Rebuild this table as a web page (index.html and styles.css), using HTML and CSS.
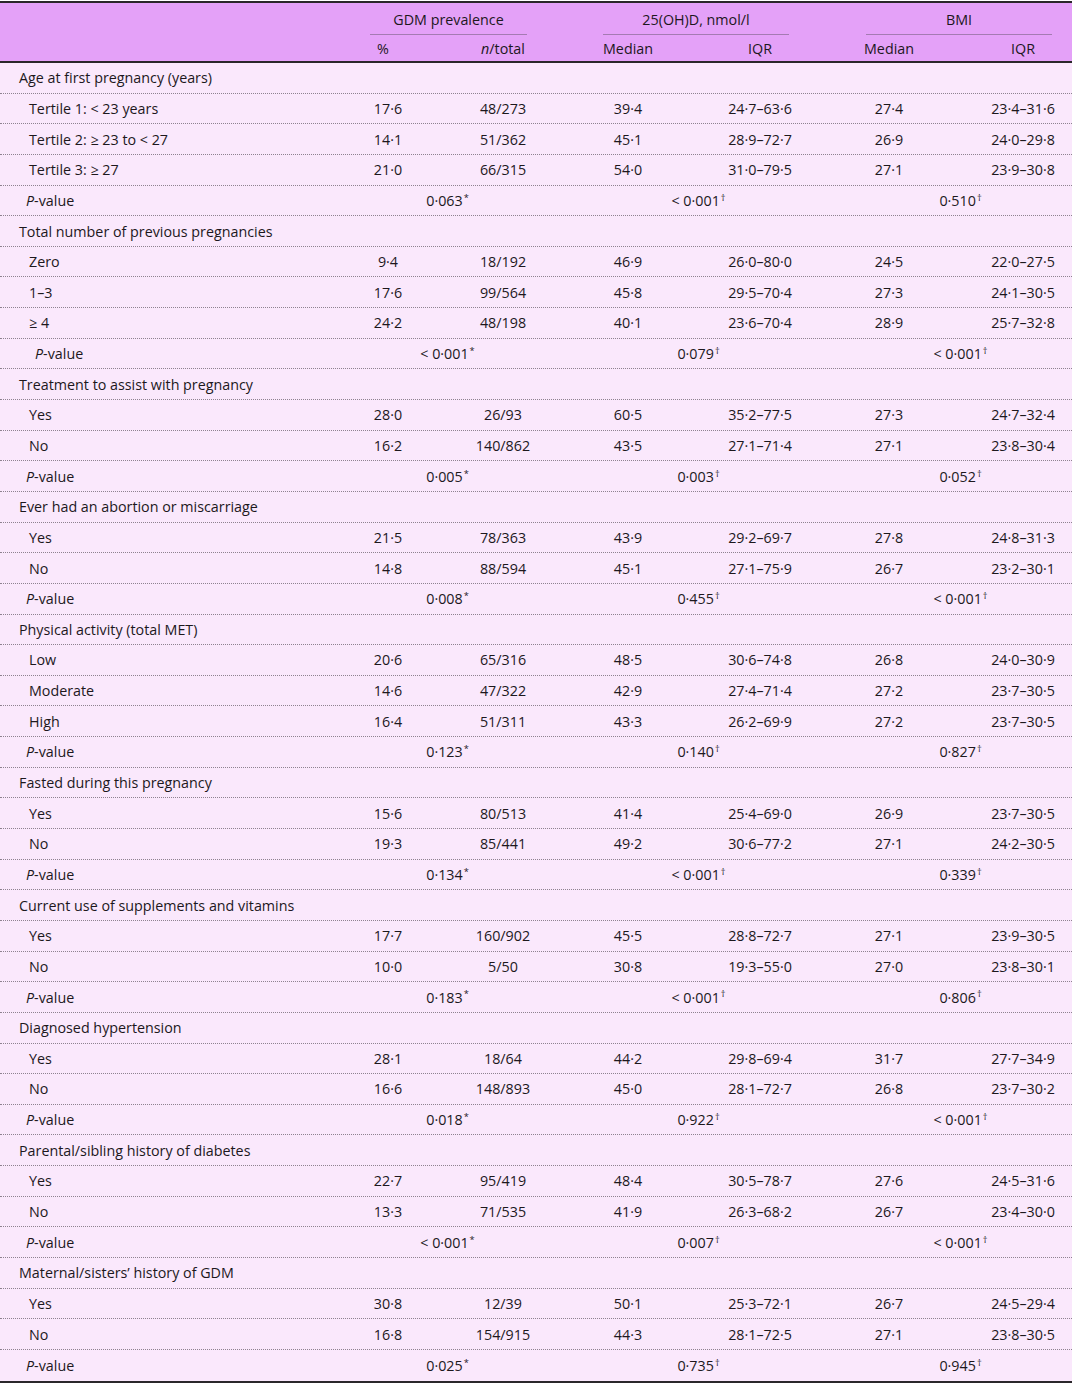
FILE: index.html
```html
<!DOCTYPE html>
<html lang="en">
<head>
<meta charset="utf-8">
<title>GDM table</title>
<link rel="stylesheet" href="styles.css">
</head>
<body>
<div class="tbl">
  <div class="thead">
    <div class="grid hrow1">
      <span class="grp g1">GDM prevalence</span>
      <span class="grp g2">25(OH)D, nmol/l</span>
      <span class="grp g3">BMI</span>
    </div>
    <div class="grid hrow2">
      <span class="c1 pct">%</span><span class="c2"><i>n</i>/total</span>
      <span class="c3">Median</span><span class="c4">IQR</span>
      <span class="c5">Median</span><span class="c6">IQR</span>
    </div>
  </div>

  <div class="grid row"><span class="lab sec">Age at first pregnancy (years)</span></div>
  <div class="grid row"><span class="lab sub">Tertile 1: &lt; 23 years</span><span class="c1">17·6</span><span class="c2">48/273</span><span class="c3">39·4</span><span class="c4">24·7–63·6</span><span class="c5">27·4</span><span class="c6">23·4–31·6</span></div>
  <div class="grid row"><span class="lab sub">Tertile 2: ≥ 23 to &lt; 27</span><span class="c1">14·1</span><span class="c2">51/362</span><span class="c3">45·1</span><span class="c4">28·9–72·7</span><span class="c5">26·9</span><span class="c6">24·0–29·8</span></div>
  <div class="grid row"><span class="lab sub">Tertile 3: ≥ 27</span><span class="c1">21·0</span><span class="c2">66/315</span><span class="c3">54·0</span><span class="c4">31·0–79·5</span><span class="c5">27·1</span><span class="c6">23·9–30·8</span></div>
  <div class="grid row"><span class="lab pv"><i>P</i>-value</span><span class="p1">0·063<sup>*</sup></span><span class="p2">&lt; 0·001<sup>†</sup></span><span class="p3">0·510<sup>†</sup></span></div>

  <div class="grid row"><span class="lab sec">Total number of previous pregnancies</span></div>
  <div class="grid row"><span class="lab sub">Zero</span><span class="c1">9·4</span><span class="c2">18/192</span><span class="c3">46·9</span><span class="c4">26·0–80·0</span><span class="c5">24·5</span><span class="c6">22·0–27·5</span></div>
  <div class="grid row"><span class="lab sub">1–3</span><span class="c1">17·6</span><span class="c2">99/564</span><span class="c3">45·8</span><span class="c4">29·5–70·4</span><span class="c5">27·3</span><span class="c6">24·1–30·5</span></div>
  <div class="grid row"><span class="lab sub">≥ 4</span><span class="c1">24·2</span><span class="c2">48/198</span><span class="c3">40·1</span><span class="c4">23·6–70·4</span><span class="c5">28·9</span><span class="c6">25·7–32·8</span></div>
  <div class="grid row"><span class="lab pv pv-deep"><i>P</i>-value</span><span class="p1">&lt; 0·001<sup>*</sup></span><span class="p2">0·079<sup>†</sup></span><span class="p3">&lt; 0·001<sup>†</sup></span></div>

  <div class="grid row"><span class="lab sec">Treatment to assist with pregnancy</span></div>
  <div class="grid row"><span class="lab sub">Yes</span><span class="c1">28·0</span><span class="c2">26/93</span><span class="c3">60·5</span><span class="c4">35·2–77·5</span><span class="c5">27·3</span><span class="c6">24·7–32·4</span></div>
  <div class="grid row"><span class="lab sub">No</span><span class="c1">16·2</span><span class="c2">140/862</span><span class="c3">43·5</span><span class="c4">27·1–71·4</span><span class="c5">27·1</span><span class="c6">23·8–30·4</span></div>
  <div class="grid row"><span class="lab pv"><i>P</i>-value</span><span class="p1">0·005<sup>*</sup></span><span class="p2">0·003<sup>†</sup></span><span class="p3">0·052<sup>†</sup></span></div>

  <div class="grid row"><span class="lab sec">Ever had an abortion or miscarriage</span></div>
  <div class="grid row"><span class="lab sub">Yes</span><span class="c1">21·5</span><span class="c2">78/363</span><span class="c3">43·9</span><span class="c4">29·2–69·7</span><span class="c5">27·8</span><span class="c6">24·8–31·3</span></div>
  <div class="grid row"><span class="lab sub">No</span><span class="c1">14·8</span><span class="c2">88/594</span><span class="c3">45·1</span><span class="c4">27·1–75·9</span><span class="c5">26·7</span><span class="c6">23·2–30·1</span></div>
  <div class="grid row"><span class="lab pv"><i>P</i>-value</span><span class="p1">0·008<sup>*</sup></span><span class="p2">0·455<sup>†</sup></span><span class="p3">&lt; 0·001<sup>†</sup></span></div>

  <div class="grid row"><span class="lab sec">Physical activity (total MET)</span></div>
  <div class="grid row"><span class="lab sub">Low</span><span class="c1">20·6</span><span class="c2">65/316</span><span class="c3">48·5</span><span class="c4">30·6–74·8</span><span class="c5">26·8</span><span class="c6">24·0–30·9</span></div>
  <div class="grid row"><span class="lab sub">Moderate</span><span class="c1">14·6</span><span class="c2">47/322</span><span class="c3">42·9</span><span class="c4">27·4–71·4</span><span class="c5">27·2</span><span class="c6">23·7–30·5</span></div>
  <div class="grid row"><span class="lab sub">High</span><span class="c1">16·4</span><span class="c2">51/311</span><span class="c3">43·3</span><span class="c4">26·2–69·9</span><span class="c5">27·2</span><span class="c6">23·7–30·5</span></div>
  <div class="grid row"><span class="lab pv"><i>P</i>-value</span><span class="p1">0·123<sup>*</sup></span><span class="p2">0·140<sup>†</sup></span><span class="p3">0·827<sup>†</sup></span></div>

  <div class="grid row"><span class="lab sec">Fasted during this pregnancy</span></div>
  <div class="grid row"><span class="lab sub">Yes</span><span class="c1">15·6</span><span class="c2">80/513</span><span class="c3">41·4</span><span class="c4">25·4–69·0</span><span class="c5">26·9</span><span class="c6">23·7–30·5</span></div>
  <div class="grid row"><span class="lab sub">No</span><span class="c1">19·3</span><span class="c2">85/441</span><span class="c3">49·2</span><span class="c4">30·6–77·2</span><span class="c5">27·1</span><span class="c6">24·2–30·5</span></div>
  <div class="grid row"><span class="lab pv"><i>P</i>-value</span><span class="p1">0·134<sup>*</sup></span><span class="p2">&lt; 0·001<sup>†</sup></span><span class="p3">0·339<sup>†</sup></span></div>

  <div class="grid row"><span class="lab sec">Current use of supplements and vitamins</span></div>
  <div class="grid row"><span class="lab sub">Yes</span><span class="c1">17·7</span><span class="c2">160/902</span><span class="c3">45·5</span><span class="c4">28·8–72·7</span><span class="c5">27·1</span><span class="c6">23·9–30·5</span></div>
  <div class="grid row"><span class="lab sub">No</span><span class="c1">10·0</span><span class="c2">5/50</span><span class="c3">30·8</span><span class="c4">19·3–55·0</span><span class="c5">27·0</span><span class="c6">23·8–30·1</span></div>
  <div class="grid row"><span class="lab pv"><i>P</i>-value</span><span class="p1">0·183<sup>*</sup></span><span class="p2">&lt; 0·001<sup>†</sup></span><span class="p3">0·806<sup>†</sup></span></div>

  <div class="grid row"><span class="lab sec">Diagnosed hypertension</span></div>
  <div class="grid row"><span class="lab sub">Yes</span><span class="c1">28·1</span><span class="c2">18/64</span><span class="c3">44·2</span><span class="c4">29·8–69·4</span><span class="c5">31·7</span><span class="c6">27·7–34·9</span></div>
  <div class="grid row"><span class="lab sub">No</span><span class="c1">16·6</span><span class="c2">148/893</span><span class="c3">45·0</span><span class="c4">28·1–72·7</span><span class="c5">26·8</span><span class="c6">23·7–30·2</span></div>
  <div class="grid row"><span class="lab pv"><i>P</i>-value</span><span class="p1">0·018<sup>*</sup></span><span class="p2">0·922<sup>†</sup></span><span class="p3">&lt; 0·001<sup>†</sup></span></div>

  <div class="grid row"><span class="lab sec">Parental/sibling history of diabetes</span></div>
  <div class="grid row"><span class="lab sub">Yes</span><span class="c1">22·7</span><span class="c2">95/419</span><span class="c3">48·4</span><span class="c4">30·5–78·7</span><span class="c5">27·6</span><span class="c6">24·5–31·6</span></div>
  <div class="grid row"><span class="lab sub">No</span><span class="c1">13·3</span><span class="c2">71/535</span><span class="c3">41·9</span><span class="c4">26·3–68·2</span><span class="c5">26·7</span><span class="c6">23·4–30·0</span></div>
  <div class="grid row"><span class="lab pv"><i>P</i>-value</span><span class="p1">&lt; 0·001<sup>*</sup></span><span class="p2">0·007<sup>†</sup></span><span class="p3">&lt; 0·001<sup>†</sup></span></div>

  <div class="grid row"><span class="lab sec">Maternal/sisters’ history of GDM</span></div>
  <div class="grid row"><span class="lab sub">Yes</span><span class="c1">30·8</span><span class="c2">12/39</span><span class="c3">50·1</span><span class="c4">25·3–72·1</span><span class="c5">26·7</span><span class="c6">24·5–29·4</span></div>
  <div class="grid row"><span class="lab sub">No</span><span class="c1">16·8</span><span class="c2">154/915</span><span class="c3">44·3</span><span class="c4">28·1–72·5</span><span class="c5">27·1</span><span class="c6">23·8–30·5</span></div>
  <div class="grid row last"><span class="lab pv"><i>P</i>-value</span><span class="p1">0·025<sup>*</sup></span><span class="p2">0·735<sup>†</sup></span><span class="p3">0·945<sup>†</sup></span></div>
</div>
</body>
</html>
```

FILE: styles.css
```css
html, body {
  margin: 0;
  padding: 0;
  background: #ffffff;
}

body {
  font-family: "Open Sans", "Noto Sans", "DejaVu Sans", sans-serif;
  font-size: 14.3px;
  color: #1d181d;
  overflow: hidden;
}

.tbl {
  width: 1072px;
  margin-top: 1px;
  border-top: 2px solid #2b272b;
  border-bottom: 2px solid #2b272b;
  background: #fae8fc;
}

.thead {
  background: #e4a1f8;
  border-bottom: 2px solid #2b272b;
}

.grid {
  display: grid;
  grid-template-columns: 368px 40px 65px 60px 71px 48px 75px 66px 72px 48px 77px 66px 16px;
  align-items: center;
  white-space: nowrap;
}

.hrow1 {
  height: 32px;
  align-items: stretch;
}

.hrow2 {
  height: 26px;
}

.grp {
  display: flex;
  align-items: center;
  justify-content: center;
  border-bottom: 1px solid #a47bb2;
  padding-top: 1px;
}

.g1 { grid-column: 2 / 5; margin: 0 6px 0 2px; }
.g2 { grid-column: 6 / 9; margin: 0 4px 0 -1px; }
.g3 { grid-column: 10 / 13; margin: 0 4px 0 1px; }

.row {
  height: 30.65px;
  box-sizing: border-box;
  border-bottom: 1px dotted #8e8290;
}

.row.last {
  border-bottom: none;
}

.lab { grid-column: 1; }
.sec { padding-left: 19px; }
.sub { padding-left: 29px; }
.pv { padding-left: 26px; }
.pv-deep { padding-left: 35px; }

.c1, .c2, .c3, .c4, .c5, .c6 { justify-self: center; }
.c1 { grid-column: 2; }
.c2 { grid-column: 4; }
.c3 { grid-column: 6; }
.c4 { grid-column: 8; }
.c5 { grid-column: 10; }
.c6 { grid-column: 12; }

.pct { margin-right: 10px; }

.p1, .p2, .p3 { justify-self: center; }
.p1 { grid-column: 2 / 5; margin-right: 6px; }
.p2 { grid-column: 6 / 9; }
.p3 { grid-column: 10 / 13; }

sup {
  font-size: 0.65em;
  line-height: 0;
  vertical-align: 0.55em;
  margin-left: 1px;
}
```
